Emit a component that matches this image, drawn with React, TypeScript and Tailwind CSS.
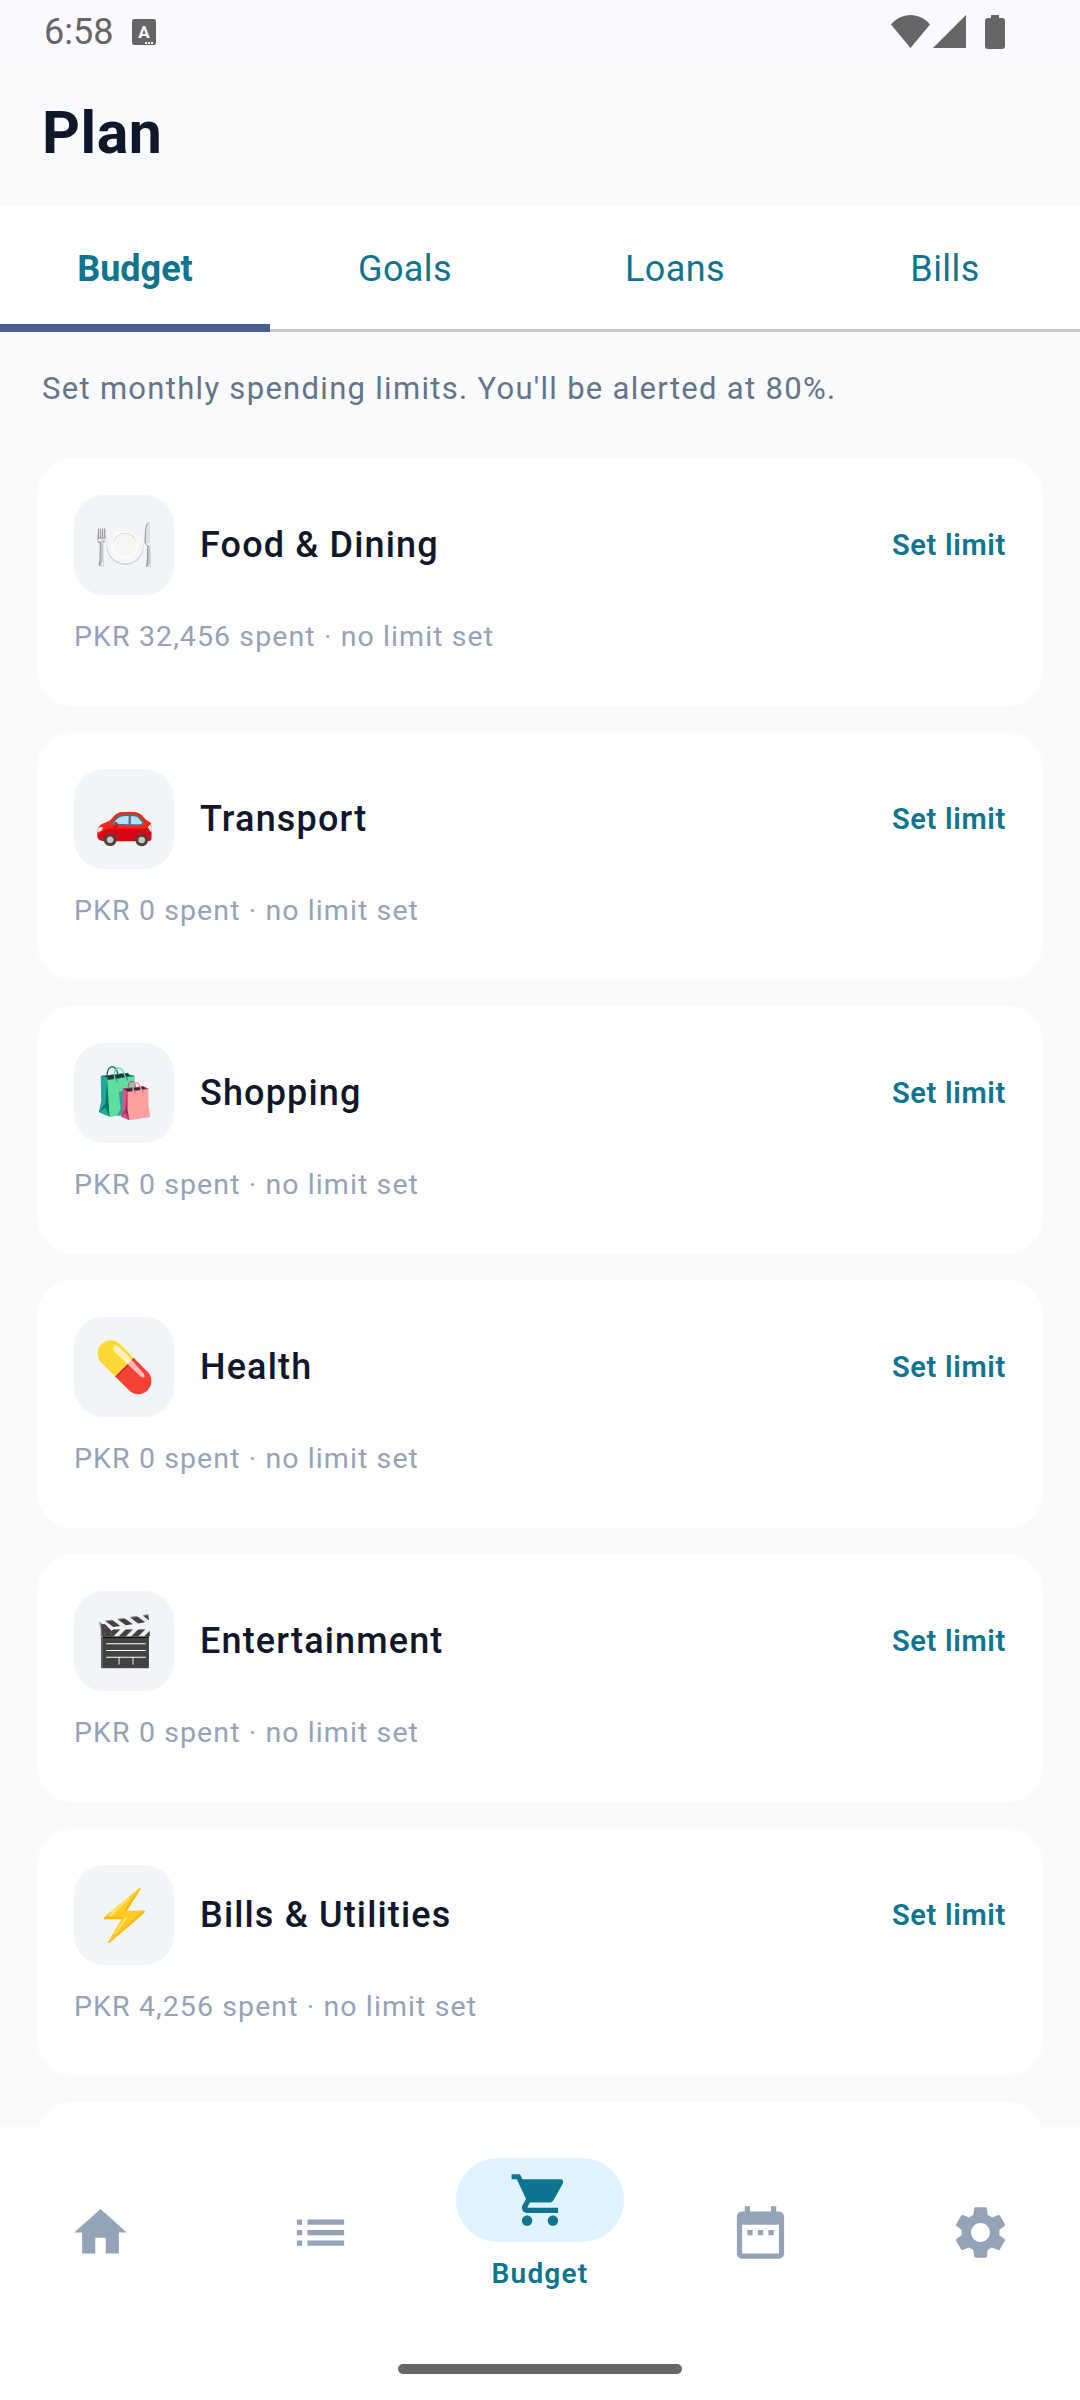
import React from "react";

const cards = [
  { emoji: "🍽️", name: "Food & Dining", spent: "PKR 32,456 spent · no limit set" },
  { emoji: "🚗", name: "Transport", spent: "PKR 0 spent · no limit set" },
  { emoji: "🛍️", name: "Shopping", spent: "PKR 0 spent · no limit set" },
  { emoji: "💊", name: "Health", spent: "PKR 0 spent · no limit set" },
  { emoji: "🎬", name: "Entertainment", spent: "PKR 0 spent · no limit set" },
  { emoji: "⚡", name: "Bills & Utilities", spent: "PKR 4,256 spent · no limit set" },
];

function Icon({ d, className }: { d: string; className: string }) {
  return (
    <svg viewBox="0 0 24 24" className={className} fill="currentColor">
      <path d={d} />
    </svg>
  );
}

export default function App() {
  return (
    <div className="relative flex h-[2400px] w-[1080px] flex-col overflow-hidden bg-[#f8fafc] font-['Roboto',sans-serif]">
      <div className="flex h-[63px] shrink-0 items-center justify-between bg-[#f9f9ff] pl-[44px] pr-[75px] text-[#666666]">
        <div className="flex items-center gap-[19px]">
          <span className="text-[36px] leading-none">6:58</span>
          <div className="relative h-[26px] w-[24px] rounded-[2px] bg-[#666666]">
            <span className="absolute left-0 top-[5px] w-[23px] text-center text-[17px] font-bold leading-[17px] text-[#f9f9ff]">A</span>
            <svg viewBox="0 0 24 26" className="absolute left-0 top-0 h-[26px] w-[24px]" fill="#f9f9ff">
              <rect x="13" y="23" width="2" height="2" />
              <rect x="16" y="23" width="2" height="2" />
              <rect x="19" y="23" width="2" height="2" />
            </svg>
          </div>
        </div>
        <div className="flex items-center">
          <svg viewBox="0 0 39 33" className="h-[33px] w-[39px]" fill="currentColor">
            <path d="M19.500 33L0 9.500C5 3.500 12 0 19.500 0S34 3.500 39 9.500z" />
          </svg>
          <svg viewBox="0 0 33 33" className="ml-[3px] h-[33px] w-[33px]" fill="currentColor">
            <path d="M33 0v33H0z" />
          </svg>
          <svg viewBox="0 0 20 34" className="ml-[19px] h-[34px] w-[20px]" fill="currentColor">
            <path d="M6 0h8v3h3a3 3 0 0 1 3 3v25a3 3 0 0 1-3 3H3a3 3 0 0 1-3-3V6a3 3 0 0 1 3-3h3z" />
          </svg>
        </div>
      </div>

      <div className="flex h-[143px] shrink-0 items-center pb-[2px] pl-[42px]">
        <h1 className="text-[59px] font-bold tracking-[0.5px] text-[#0f172a]">Plan</h1>
      </div>

      <div className="relative flex h-[126px] shrink-0 bg-white text-[36px] tracking-[0.4px] text-[#0e7490]">
        <div className="flex w-[270px] items-center justify-center font-bold tracking-normal">Budget</div>
        <div className="flex w-[270px] items-center justify-center">Goals</div>
        <div className="flex w-[270px] items-center justify-center">Loans</div>
        <div className="flex w-[270px] items-center justify-center">Bills</div>
        <div className="absolute bottom-0 left-0 h-[3px] w-full bg-[#c4c6d0]" />
        <div className="absolute bottom-0 left-0 h-[8px] w-[270px] bg-[#4a5c92]" />
      </div>

      <p className="mt-[37px] pl-[42px] text-[31px] leading-[40px] tracking-[1.3px] text-[#64748b]">
        Set monthly spending limits. You'll be alerted at 80%.
      </p>

      <div className="mt-[49px] flex flex-col gap-[26px] px-[37px]">
        {cards.map((c) => (
          <div key={c.name} className="h-[248px] rounded-[36px] bg-white px-[37px] pt-[37px]">
            <div className="flex items-center">
              <div className="flex h-[100px] w-[100px] items-center justify-center rounded-[30px] bg-[#f1f5f9] text-[49px] leading-none">
                {c.emoji}
              </div>
              <div className="ml-[26px] flex-1 text-[36px] font-medium tracking-[1.150px] text-[#0f172a]">{c.name}</div>
              <div className="pt-[2px] text-[29px] font-semibold tracking-[0.7px] text-[#0e7490]">Set limit</div>
            </div>
            <div className="mt-[24px] text-[28.500px] leading-[36px] tracking-[1.100px] text-[#94a3b8]">{c.spent}</div>
          </div>
        ))}
        <div className="h-[248px] rounded-[36px] bg-white" />
      </div>

      <div className="absolute bottom-0 left-0 h-[273px] w-full bg-white">
        <div className="flex h-full justify-between px-[16px] text-[#94a3b8]">
          <div className="flex w-[168px] justify-center pt-[74px]">
            <Icon className="h-[63px] w-[63px]" d="M10 20v-6h4v6h5v-8h3L12 3 2 12h3v8z" />
          </div>
          <div className="flex w-[168px] justify-center pt-[74px]">
            <Icon className="h-[63px] w-[63px]" d="M3 13h2v-2H3v2zm0 4h2v-2H3v2zm0-8h2V7H3v2zm4 4h14v-2H7v2zm0 4h14v-2H7v2zM7 7v2h14V7H7z" />
          </div>
          <div className="flex w-[168px] flex-col items-center pt-[31px]">
            <div className="flex h-[84px] w-[168px] items-center justify-center rounded-full bg-[#e0f2fe] text-[#0e7490]">
              <Icon className="h-[62px] w-[62px]" d="M7 18c-1.100 0-1.990.9-1.990 2S5.900 22 7 22s2-.9 2-2-.9-2-2-2zM1 2v2h2l3.600 7.590-1.350 2.450c-.16.280-.25.610-.25.960 0 1.100.9 2 2 2h12v-2H7.420c-.14 0-.25-.11-.25-.25l.03-.12.9-1.630h7.450c.75 0 1.410-.41 1.750-1.030l3.580-6.490A1 1 0 0 0 20 4H5.210l-.94-2H1zm16 16c-1.100 0-1.990.9-1.990 2s.89 2 1.990 2 2-.9 2-2-.9-2-2-2z" />
            </div>
            <div className="mt-[14px] text-[28px] font-semibold leading-[36px] tracking-[1.200px] text-[#0e7490]">Budget</div>
          </div>
          <div className="flex w-[168px] justify-center pt-[74px]">
            <Icon className="h-[63px] w-[63px]" d="M19 4h-1V2h-2v2H8V2H6v2H5c-1.100 0-2 .9-2 2v14c0 1.100.9 2 2 2h14c1.100 0 2-.9 2-2V6c0-1.100-.9-2-2-2zm0 16H5V9h14v11zM7 11h2v2H7zm4 0h2v2h-2zm4 0h2v2h-2z" />
          </div>
          <div className="flex w-[168px] justify-center pt-[74px]">
            <Icon className="h-[63px] w-[63px]" d="M19.140 12.940c.04-.3.060-.61.060-.94 0-.32-.02-.64-.07-.94l2.030-1.580a.49.49 0 0 0 .12-.61l-1.920-3.320a.488.488 0 0 0-.59-.22l-2.390.96c-.5-.38-1.030-.7-1.620-.94l-.36-2.540a.484.484 0 0 0-.48-.41h-3.840c-.24 0-.43.17-.47.41l-.36 2.540c-.59.24-1.130.57-1.620.94l-2.390-.96c-.22-.08-.47 0-.59.22L2.740 8.870c-.12.21-.08.47.12.61l2.030 1.580c-.05.3-.09.63-.09.94s.02.64.07.94l-2.030 1.580a.49.49 0 0 0-.12.61l1.920 3.320c.12.22.37.29.59.22l2.390-.96c.5.38 1.030.7 1.620.94l.36 2.540c.05.24.24.41.48.41h3.840c.24 0 .44-.17.47-.41l.36-2.540c.59-.24 1.130-.56 1.620-.94l2.390.96c.22.08.47 0 .59-.22l1.920-3.320c.12-.22.07-.47-.12-.61l-2.010-1.580zM12 15.600c-1.980 0-3.600-1.620-3.600-3.600s1.620-3.600 3.600-3.600 3.600 1.620 3.600 3.600-1.620 3.600-3.600 3.600z" />
          </div>
        </div>
        <div className="absolute bottom-[26px] left-[398px] h-[10px] w-[284px] rounded-full bg-[#666666]" />
      </div>
    </div>
  );
}
